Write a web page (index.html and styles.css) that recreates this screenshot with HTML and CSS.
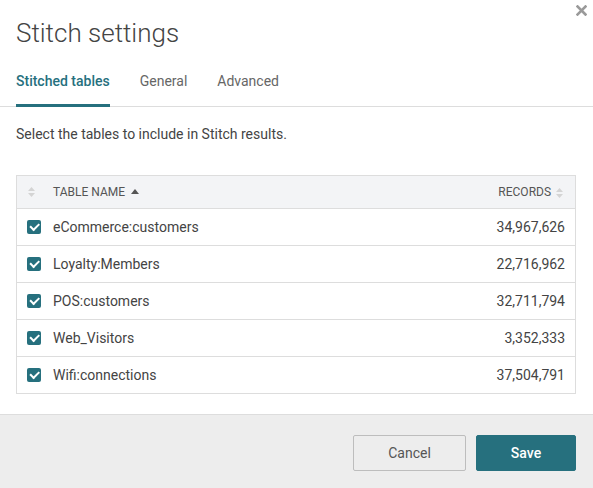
FILE: index.html
```html
<!DOCTYPE html>
<html lang="en">
<head>
    <meta charset="UTF-8">
    <title>Stitch settings</title>
    <link rel="stylesheet" href="styles.css">
</head>
<body>
    <div class="dialog">
        <button class="close" aria-label="Close">
            <svg width="11" height="11" viewBox="0 0 11 11"><path d="M1.5 1.5 L9.5 9.5 M9.5 1.5 L1.5 9.5" stroke="#9a9a9a" stroke-width="2.6" stroke-linecap="square"/></svg>
        </button>

        <div class="header">
            <h1>Stitch settings</h1>
            <div class="tabs">
                <span class="tab active">Stitched tables</span>
                <span class="tab">General</span>
                <span class="tab">Advanced</span>
            </div>
        </div>

        <div class="content">
            <p class="hint">Select the tables to include in Stitch results.</p>

            <table class="grid">
                <thead>
                    <tr>
                        <th class="col-check">
                            <svg class="sort" width="7" height="10" viewBox="0 0 7 10"><path d="M3.5 0 L7 4 H0 Z M3.5 10 L7 6 H0 Z" fill="#d4d4d4"/></svg>
                        </th>
                        <th>Table name <svg class="asc" width="8" height="5" viewBox="0 0 8 5"><path d="M4 0 L8 5 H0 Z" fill="#555"/></svg></th>
                        <th class="num">Records <svg class="sort" width="7" height="10" viewBox="0 0 7 10"><path d="M3.5 0 L7 4 H0 Z M3.5 10 L7 6 H0 Z" fill="#d4d4d4"/></svg></th>
                    </tr>
                </thead>
                <tbody>
                    <tr><td class="col-check"><span class="check"></span></td><td>eCommerce:customers</td><td class="num">34,967,626</td></tr>
                    <tr><td class="col-check"><span class="check"></span></td><td>Loyalty:Members</td><td class="num">22,716,962</td></tr>
                    <tr><td class="col-check"><span class="check"></span></td><td>POS:customers</td><td class="num">32,711,794</td></tr>
                    <tr><td class="col-check"><span class="check"></span></td><td>Web_Visitors</td><td class="num">3,352,333</td></tr>
                    <tr><td class="col-check"><span class="check"></span></td><td>Wifi:connections</td><td class="num">37,504,791</td></tr>
                </tbody>
            </table>
        </div>

        <div class="footer">
            <button class="btn">Cancel</button>
            <button class="btn primary">Save</button>
        </div>
    </div>
</body>
</html>
```

FILE: styles.css
```css
body {
    margin: 0;
    font-family: Roboto, "Liberation Sans", sans-serif;
    color: #444;
    background: #fff;
}

.dialog {
    position: relative;
    width: 593px;
    height: 488px;
    display: flex;
    flex-direction: column;
}

.close {
    position: absolute;
    top: 5px;
    right: 6px;
    padding: 0;
    border: none;
    background: none;
    line-height: 0;
}

.header {
    padding: 16px 0 0;
}

h1 {
    margin: 0 16px;
    font-size: 26px;
    font-weight: 300;
    line-height: 34px;
    color: #444;
}

.tabs {
    display: flex;
    gap: 30px;
    margin-top: 21px;
    padding: 0 16px;
    border-bottom: 1px solid #ddd;
}

.tab {
    font-size: 14px;
    line-height: 20px;
    color: #666;
    padding-bottom: 13px;
    border-bottom: 3px solid transparent;
    margin-bottom: -1px;
}

.tab.active {
    color: #26707e;
    font-weight: 500;
    border-bottom-color: #26707e;
}

.content {
    flex: 1;
    padding: 17px 17px 0 16px;
}

.hint {
    margin: 0 0 31px;
    font-size: 14px;
    line-height: 20px;
}

.grid {
    width: 100%;
    border-collapse: collapse;
    border: 1px solid #ddd;
    font-size: 14px;
}

.grid th {
    height: 32px;
    padding: 0;
    background: #f3f4f6;
    border-bottom: 1px solid #ddd;
    text-align: left;
    font-size: 12px;
    font-weight: 400;
    text-transform: uppercase;
    color: #555;
}

.grid td {
    height: 36px;
    padding: 0;
    border-bottom: 1px solid #ddd;
    color: #444;
}

.grid .col-check {
    width: 25px;
    padding-left: 10px;
    line-height: 0;
}

.grid th.col-check {
    padding-left: 11px;
}

.grid .num {
    text-align: right;
    padding-right: 10px;
}

.grid th.num {
    padding-right: 12px;
}

.sort,
.asc {
    vertical-align: middle;
}

.asc {
    margin-left: 3px;
    position: relative;
    top: -1px;
}

.grid th.num .sort {
    margin-left: 2px;
}

.check {
    display: inline-block;
    width: 14px;
    height: 14px;
    border-radius: 2px;
    background: #26707e;
    position: relative;
}

.check::after {
    content: "";
    position: absolute;
    left: 3px;
    top: 3px;
    width: 7px;
    height: 3.5px;
    border-left: 2px solid #fff;
    border-bottom: 2px solid #fff;
    transform: rotate(-45deg);
}

.footer {
    display: flex;
    justify-content: flex-end;
    gap: 10px;
    padding: 20px 17px 17px;
    background: #ededed;
    border-top: 1px solid #ddd;
}

.btn {
    height: 36px;
    width: 113px;
    font-family: inherit;
    font-size: 14px;
    color: #555;
    background: #ededed;
    border: 1px solid #bdbdbd;
    border-radius: 2px;
}

.btn.primary {
    width: 100px;
    color: #fff;
    font-weight: 500;
    background: #26707e;
    border-color: #26707e;
}
```
